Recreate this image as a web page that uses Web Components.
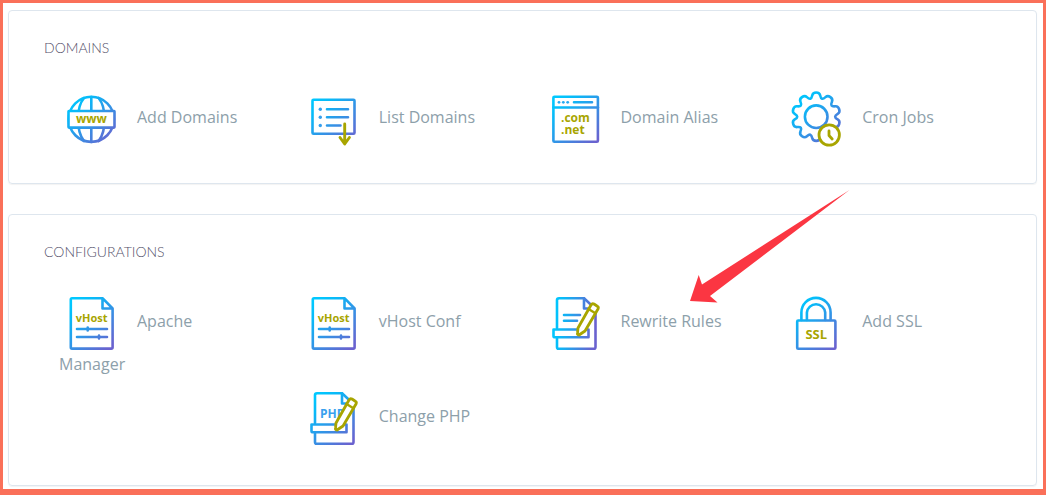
<!DOCTYPE html>
<html lang="en">
<head>
<meta charset="utf-8">
<meta name="viewport" content="width=device-width, initial-scale=1">
<title>Website manager</title>
<style>
body { margin: 0; background: #fff; font-family: "Open Sans", "Noto Sans", sans-serif; font-size: 16px; color: #8da0aa; }
</style>
</head>
<body>
<panel-frame>
  <panel-card heading="Domains">
    <panel-tile icon="globe">Add Domains</panel-tile>
    <panel-tile icon="list">List Domains</panel-tile>
    <panel-tile icon="alias">Domain Alias</panel-tile>
    <panel-tile icon="cron">Cron Jobs</panel-tile>
  </panel-card>
  <panel-card heading="Configurations" class="grow">
    <panel-tile icon="vhost" class="tall">Apache Manager</panel-tile>
    <panel-tile icon="vhost">vHost Conf</panel-tile>
    <panel-tile icon="rewrite">Rewrite Rules<callout-arrow slot="note"></callout-arrow></panel-tile>
    <panel-tile icon="ssl">Add SSL</panel-tile>
    <panel-tile icon="php">Change PHP</panel-tile>
  </panel-card>
</panel-frame>
<script>
const pencil = '<path d="M35 37 48 14Q49 12 51 13L54 15Q56 16 55 18L42 40 36 44Q34 44 34.5 42Z" fill="#fff" stroke="#a8a500" stroke-width="2.8"/><path d="M45.5 18 52 22" stroke="#a8a500" stroke-width="2.4"/>';
const sheet = '<path d="M14 37V9Q14 7.3 16 7.3H41L52.5 18V56Q52.5 57.8 51 57.8H15.500Q14 57.8 14 56V47"/><path d="M41 7.300V17.500H52"/><path d="M10.500 38.500H45.500V46.300H12Q10.500 46.300 10.500 45Z"/>';

// Ten-toothed wheel outline, rounded by running curves through edge midpoints.
function gearPath(cx, cy) {
  const pts = [];
  for (let i = 0; i < 10; i++) {
    for (const [offset, r] of [[-14, 19], [-8, 24.4], [8, 24.4], [14, 19]]) {
      const a = (i * 36 + offset) * Math.PI / 180;
      pts.push([cx + r * Math.sin(a), cy - r * Math.cos(a)]);
    }
  }
  const mid = (p, q) => ((p[0] + q[0]) / 2).toFixed(2) + ' ' + ((p[1] + q[1]) / 2).toFixed(2);
  let d = 'M' + mid(pts[pts.length - 1], pts[0]);
  pts.forEach((p, i) => { d += 'Q' + p[0].toFixed(2) + ' ' + p[1].toFixed(2) + ' ' + mid(p, pts[(i + 1) % pts.length]); });
  return d + 'Z';
}

const icons = {
  globe: `<circle cx="32.300" cy="32.300" r="22.600"/><path d="M32.300 10V55M25 11C20 17 19 26 19 32S20 48 25 54M39.600 11C44.600 17 45.600 26 45.600 32S44.600 48 39.600 54"/>
    <rect x="9.500" y="24" width="46" height="16.600" rx=".5" fill="#fff"/><text x="32.500" y="36" font-size="12" class="olive">www</text>`,
  list: `<rect x="11.500" y="12.800" width="42" height="34" rx="1"/><path d="M26 22.300H47M26 30.300H47M26 38.500H39.500"/>
    <g fill="#359fee" stroke="none"><circle cx="19.300" cy="22.300" r="1.700"/><circle cx="19.300" cy="30.300" r="1.700"/><circle cx="19.300" cy="38.500" r="1.700"/></g>
    <path d="M43.700 37V56M39 50.500 43.700 57 48.400 50.500" stroke="#a8a500" stroke-width="2.900"/>`,
  alias: `<rect x="10.400" y="9.800" width="44.500" height="45" rx="1"/><path d="M10.400 20.500H55M31 15.300H49"/>
    <g fill="#25aaf2" stroke="none"><circle cx="16" cy="15.300" r="1.400"/><circle cx="20.300" cy="15.300" r="1.400"/><circle cx="24.700" cy="15.300" r="1.400"/></g>
    <text x="18" y="35" class="olive start" font-size="12">.com</text><text x="18" y="47" class="olive start" font-size="12">.net</text>`,
  cron: `<path d="${gearPath(32.2, 29.7)}"/><circle cx="32.200" cy="29.700" r="11.300"/>
    <circle cx="45.200" cy="48" r="10.200" fill="#fff" stroke="#a8a500" stroke-width="2.800"/><path d="M45 44V48.500L48.200 52" stroke="#a8a500" stroke-width="2.800"/>`,
  vhost: `<path d="M43.500 7.200H13Q11.800 7.200 11.800 8.500V56.300Q11.800 57.600 13 57.600H52.300Q53.600 57.600 53.600 56.300V17.500ZM43.500 7.200V17.500H53.600"/>
    <text x="32.700" y="31" class="olive" font-size="11">vHost</text>
    <path d="M18 38H48M18 46H48M28.700 36.500V39.500M40 44.500V47.500" />`,
  rewrite: `${sheet}<path d="M21 24H37M21 29.700H34"/>${pencil}`,
  php: `${sheet}<text x="19" y="32" font-size="12" class="blue start">PHP</text>${pencil}`,
  ssl: `<path d="M17.400 29V21.500A14.600 14.600 0 0 1 46.600 21.500V29M22.900 29V21.500A9.200 9.200 0 0 1 41.200 21.500V29"/>
    <rect x="13.200" y="29.500" width="38.200" height="28.200" rx="1"/><text x="32.300" y="47.500" font-size="13" class="olive">SSL</text>`
};

function render(host, html) {
  const t = document.createElement('template');
  t.innerHTML = html;
  host.attachShadow({ mode: 'open' }).append(t.content.cloneNode(true));
}

customElements.define('panel-frame', class extends HTMLElement {
  constructor() {
    super();
    render(this, `<style>
      :host { box-sizing: border-box; min-height: 100vh; display: flex; flex-direction: column; gap: 30px;
        border: 3px solid #fa7059; border-bottom-width: 6px; padding: 7px 6px 3px 5px; }
      main { display: contents; }
      ::slotted(.grow) { flex: 1; }
    </style><main><slot></slot></main>`);
  }
});

customElements.define('panel-card', class extends HTMLElement {
  constructor() {
    super();
    render(this, `<style>
      :host { display: block; box-sizing: border-box; border: 1px solid #dee6ee; border-radius: 4px;
        box-shadow: 0 1px 1px rgba(0, 0, 0, .05); padding: 26px 25px 32px 35px; }
      h2 { margin: 0 0 28px; font: 300 14px/22px Lato, sans-serif; color: #54506a; text-transform: uppercase; }
      .tiles { display: grid; grid-template-columns: repeat(4, 1fr); grid-auto-rows: min-content; row-gap: 31px; }
      ::slotted(.tall) { grid-row: span 2; }
    </style><section><h2></h2><div class="tiles"><slot></slot></div></section>`);
    this.shadowRoot.querySelector('h2').textContent = this.getAttribute('heading');
  }
});

customElements.define('panel-tile', class extends HTMLElement {
  constructor() {
    super();
    render(this, `<style>
      :host { display: block; position: relative; padding: 0 30px 0 15px; line-height: 18px; }
      a { color: inherit; text-decoration: none; }
      svg { width: 64px; height: 64px; vertical-align: middle; margin-right: 14px; fill: none; stroke: url(#tint);
        stroke-width: 2.6; stroke-linecap: round; stroke-linejoin: round; }
      text { stroke: none; font-family: "Open Sans", sans-serif; font-weight: 700; text-anchor: middle; }
      .start { text-anchor: start; }
      .olive { fill: #a8a500; }
      .blue { fill: #38a0ee; }
    </style><a href="#"><svg viewBox="0 0 64 64" aria-hidden="true"><defs>
      <linearGradient id="tint" gradientUnits="userSpaceOnUse" x1="12" y1="12" x2="${this.getAttribute('icon') === 'rewrite' ? 53 : 52}" y2="${this.getAttribute('icon') === 'rewrite' ? 16 : 55}">
      <stop stop-color="#00c8ff"/><stop offset=".2" stop-color="#08baf8"/><stop offset="1" stop-color="#6a62cf"/></linearGradient></defs>
      ${icons[this.getAttribute('icon')]}</svg><slot></slot></a><slot name="note"></slot>`);
  }
});

customElements.define('callout-arrow', class extends HTMLElement {
  constructor() {
    super();
    render(this, `<style>
      :host { position: absolute; left: 162px; bottom: 52px; width: 160px; height: 113px; pointer-events: none; z-index: 1; }
      svg { display: block; width: 100%; height: 100%; }
    </style><svg viewBox="0 0 160 113" aria-hidden="true"><path d="M159.500 0 12 94.500 8.700 85 0 111 27.500 112.500 20 106Z" fill="#fb3642"/></svg>`);
  }
});
</script>
</body>
</html>
